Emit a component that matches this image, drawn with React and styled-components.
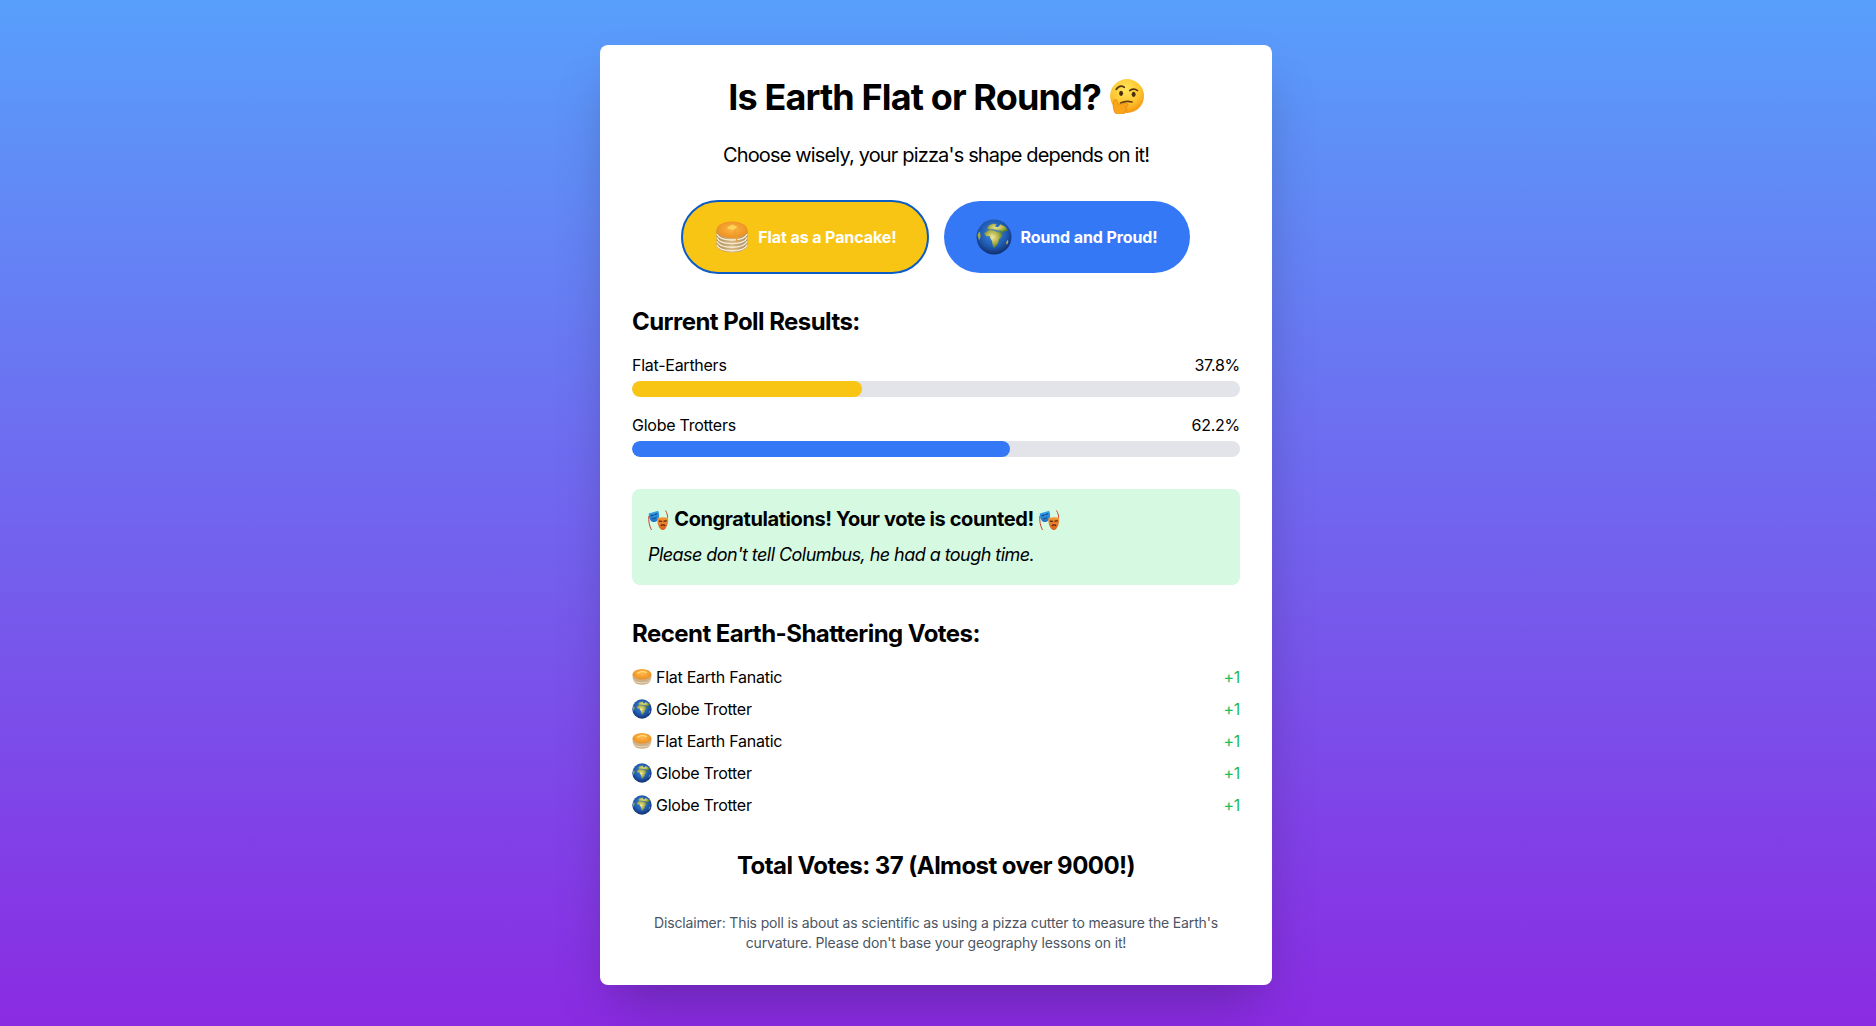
import React from "react";
import styled, { createGlobalStyle } from "styled-components";

const YELLOW = "#f9c514";
const BLUE = "#3578f6";

const results = [
  { label: "Flat-Earthers", value: 37.8, color: YELLOW },
  { label: "Globe Trotters", value: 62.2, color: BLUE },
];

const recent = ["flat", "globe", "flat", "globe", "globe"];

const ThinkingEmoji = () => (
  <EmojiSvg $size={36} viewBox="1.500 0 33 33" aria-label="thinking">
    <defs>
      <radialGradient id="thinkFace" cx="45%" cy="30%" r="72%">
        <stop offset="0" stopColor="#ffe65c" />
        <stop offset="0.6" stopColor="#fec62f" />
        <stop offset="1" stopColor="#f4920f" />
      </radialGradient>
    </defs>
    <circle cx="19" cy="16.500" r="15.500" fill="url(#thinkFace)" />
    <path d="M9 10.500c2-3 5-3.600 7.500-2" fill="none" stroke="#5a3410" strokeWidth="1.500" strokeLinecap="round" />
    <path d="M21.500 11.500c2.200-1.400 5-1.600 7 0" fill="none" stroke="#5a3410" strokeWidth="1.500" strokeLinecap="round" />
    <ellipse cx="13.500" cy="14" rx="1.800" ry="2.400" fill="#4a2c0c" />
    <ellipse cx="25" cy="15" rx="1.800" ry="2.400" fill="#4a2c0c" />
    <path d="M13 23c3-1.600 7-2 10.500-1" fill="none" stroke="#6b3c10" strokeWidth="1.500" strokeLinecap="round" />
    <path
      d="M7 20.500c1.500-1.300 2.800-.6 3.200 1l.8 2.600 7.500-.8c1.800-.1 2 2.300.4 2.700l-2 .6 1.400.8c.8 1.300-.1 2.500-1.300 2.500l.3 1.500c-.2 1.300-1.400 1.800-2.500 1.400-3 1.500-6 .9-7.300-1.600-1.200-2.800-1.600-6-1-8.700z"
      fill="#f9a51c"
      stroke="#e2820f"
      strokeWidth="0.600"
    />
  </EmojiSvg>
);

// stack in the big button
const PancakeEmoji = () => (
  <EmojiSvg $size={36} viewBox="0 0 36 36" aria-label="pancakes">
    <defs>
      <radialGradient id="pancakeTop" cx="50%" cy="45%" r="60%">
        <stop offset="0" stopColor="#fdb440" />
        <stop offset="0.8" stopColor="#ee9426" />
        <stop offset="1" stopColor="#d99a4a" />
      </radialGradient>
      <linearGradient id="pancakeSide" x1="0" x2="1" y1="0" y2="0">
        <stop offset="0" stopColor="#a98a5c" />
        <stop offset="0.5" stopColor="#d8b884" />
        <stop offset="1" stopColor="#a98a5c" />
      </linearGradient>
    </defs>
    <path d="M2.500 11v15c0 4 7 7.500 15.500 7.500s15.500-3.500 15.500-7.500V11z" fill="url(#pancakeSide)" />
    {[0, 1, 2, 3].map((i) => (
      <path
        key={i}
        d={`M2.800 ${15 + i * 3.6}c1.500 3.800 7.500 6 15.200 6s13.700-2.200 15.200-6`}
        fill="none"
        stroke="#f8ecd4"
        strokeWidth="1.400"
      />
    ))}
    <ellipse cx="18" cy="11" rx="15.500" ry="8.500" fill="url(#pancakeTop)" />
    <path d="M13.500 8l5-2.500 5 2.500-4.500 3-5.500-1.200z" fill="#fdd35a" />
    <path d="M20 11l2 4 .8 8" fill="none" stroke="#e8a030" strokeWidth="1.200" />
  </EmojiSvg>
);

// small one in the vote list, reads as one thick cake
const SmallPancake = () => (
  <EmojiSvg $size={20} viewBox="0 0 36 36" aria-label="pancakes">
    <defs>
      <radialGradient id="smallTop" cx="50%" cy="40%" r="60%">
        <stop offset="0" stopColor="#fdb94a" />
        <stop offset="1" stopColor="#ec8f24" />
      </radialGradient>
    </defs>
    <path d="M1 14c0 10 2 18 17 18s17-8 17-18z" fill="#cdb089" />
    <path d="M2 22c3 5 8 6.500 16 6.500S31 27 34 22" fill="none" stroke="#ead9bd" strokeWidth="1.800" />
    <ellipse cx="18" cy="13" rx="17" ry="9.500" fill="url(#smallTop)" />
    <path d="M10 11c4-3 11-3.500 16-1" fill="none" stroke="#fdd675" strokeWidth="2.500" strokeLinecap="round" />
  </EmojiSvg>
);

const GlobeEmoji = ({ size = 36 }) => (
  <EmojiSvg $size={size} viewBox="0 0 36 36" aria-label="globe">
    <defs>
      <radialGradient id="globeSea" cx="48%" cy="40%" r="62%">
        <stop offset="0" stopColor="#3f8fe0" />
        <stop offset="0.65" stopColor="#1e56ad" />
        <stop offset="1" stopColor="#102a66" />
      </radialGradient>
      <radialGradient id="globeLand" cx="45%" cy="40%" r="60%">
        <stop offset="0" stopColor="#efe9a2" />
        <stop offset="0.55" stopColor="#b3b34a" />
        <stop offset="1" stopColor="#48792c" />
      </radialGradient>
    </defs>
    <circle cx="18" cy="18" r="17.500" fill="url(#globeSea)" />
    <path
      d="M9 13.500l4-2.500 5 .5 2.500 1.300 4.500-.3 1.500 3-1 2.800-2.500 2-.6 3.500-2.200 3.400-2.600 2-1-3.500-.6-3.600-1.600-2.500-.7-2.500-3.200.2-2.400-2.500z"
      fill="url(#globeLand)"
    />
    <path
      d="M11 9l2.500-3 4-1.500 3 .8-1.500 2.500 3 .5 2.500-3 5 2.500 2.500 4-3 .5-3 1.500-1.500-2-4-.5-3.500-1-4 .500z"
      fill="url(#globeLand)"
    />
    <path d="M30 24l1.600-3 .8 1.200-1.400 3.600z" fill="#c9b84f" />
    <path d="M1.500 16c.8-2 1.500-3 2.500-3.500l.6 5-1.500 4z" fill="#a6a83f" />
  </EmojiSvg>
);

const MasksEmoji = () => (
  <EmojiSvg $size={21} viewBox="0 0 21 21" aria-label="masks">
    <defs>
      <linearGradient id="maskBlue" x1="0" x2="0" y1="0" y2="1">
        <stop offset="0" stopColor="#38a5ec" />
        <stop offset="1" stopColor="#1c6fc4" />
      </linearGradient>
      <linearGradient id="maskOrange" x1="0" x2="0" y1="0" y2="1">
        <stop offset="0" stopColor="#f09a3a" />
        <stop offset="1" stopColor="#d85f1e" />
      </linearGradient>
    </defs>
    <path d="M.8 6c-.4 5 .5 10 2.700 14" fill="none" stroke="#d0402e" strokeWidth="1" />
    <path d="M17.500 .5c1.800 2.800 2.500 6 1.900 9.500" fill="none" stroke="#c94a30" strokeWidth="1" />
    <path d="M.8 3.500L10.200.7c1.500 3.500 1.300 7.300-1 9.800-1.900 2-5 2.200-6.500.1C1.200 8.500.6 6 .8 3.500z" fill="url(#maskBlue)" />
    <path d="M3.200 5.800l2-.7M7 4.500l1.800-.7" stroke="#0e3f78" strokeWidth="1.100" strokeLinecap="round" />
    <path d="M4.300 8.600c1.500.3 3-.2 3.900-1.300" fill="none" stroke="#0e3f78" strokeWidth="0.900" />
    <path d="M9.300 8.200c3-1.100 7-1.400 10.700-.4.500 3.700-.1 7.500-2.500 10.600-1.500 2-3.500 2.200-5 .7-2.400-2.500-3.500-6.700-3.200-10.900z" fill="url(#maskOrange)" />
    <path d="M11.300 11.200l2.300.1M16 11.200l2.300-.3" stroke="#5c2408" strokeWidth="1.200" strokeLinecap="round" />
    <path d="M12.800 15.800c1.200-1.200 3.300-1.200 4.300.1" fill="none" stroke="#5c2408" strokeWidth="1.100" />
  </EmojiSvg>
);

const App = () => (
  <Page>
    <GlobalStyle />
    <Card>
      <Title>
        Is Earth Flat or Round? <ThinkingEmoji />
      </Title>
      <Subtitle>Choose wisely, your pizza's shape depends on it!</Subtitle>

      <Buttons>
        <VoteButton $bg={YELLOW} $focused>
          <PancakeEmoji />
          Flat as a Pancake!
        </VoteButton>
        <VoteButton $bg={BLUE}>
          <GlobeEmoji />
          Round and Proud!
        </VoteButton>
      </Buttons>

      <Heading>Current Poll Results:</Heading>
      <Results>
        {results.map((r) => (
          <div key={r.label}>
            <ResultLabel>
              <span>{r.label}</span>
              <span>{r.value}%</span>
            </ResultLabel>
            <Track>
              <Fill $color={r.color} style={{ width: `${r.value}%` }} />
            </Track>
          </div>
        ))}
      </Results>

      <Notice>
        <NoticeTitle>
          <MasksEmoji /> Congratulations! Your vote is counted! <MasksEmoji />
        </NoticeTitle>
        <NoticeText>Please don't tell Columbus, he had a tough time.</NoticeText>
      </Notice>

      <Heading>Recent Earth-Shattering Votes:</Heading>
      <VoteList>
        {recent.map((kind, i) => (
          <VoteRow key={i}>
            <VoteName>
              {kind === "flat" ? <SmallPancake /> : <GlobeEmoji size={20} />}
              {kind === "flat" ? "Flat Earth Fanatic" : "Globe Trotter"}
            </VoteName>
            <PlusOne>+1</PlusOne>
          </VoteRow>
        ))}
      </VoteList>

      <Total>Total Votes: 37 (Almost over 9000!)</Total>
      <Disclaimer>
        Disclaimer: This poll is about as scientific as using a pizza cutter to measure the Earth's
        curvature. Please don't base your geography lessons on it!
      </Disclaimer>
    </Card>
  </Page>
);

export default App;

const GlobalStyle = createGlobalStyle`
  * { box-sizing: border-box; }
  body {
    margin: 0;
    font-family: Inter, "Liberation Sans", sans-serif;
    color: #000;
  }
`;

const Page = styled.div`
  min-height: 100vh;
  display: flex;
  justify-content: center;
  align-items: flex-start;
  padding: 45px 4px 0 0;
  background: linear-gradient(to bottom, #589ffb, #8a2be2);
`;

const Card = styled.div`
  width: 672px;
  padding: 32px;
  background: #fff;
  border-radius: 8px;
  box-shadow: 0 25px 50px -12px rgba(0, 0, 0, 0.25);
`;

const EmojiSvg = styled.svg`
  width: ${(p) => p.$size}px;
  height: ${(p) => p.$size}px;
  flex-shrink: 0;
  vertical-align: middle;
`;

const Title = styled.h1`
  margin: 0 0 23px;
  font-size: 36px;
  line-height: 40px;
  font-weight: 700;
  letter-spacing: -0.87px;
  text-align: center;
  svg {
    position: relative;
    top: -4px;
    margin-left: -1px;
  }
`;

const Subtitle = styled.p`
  margin: 0 0 32px;
  font-size: 20px;
  line-height: 28px;
  letter-spacing: -0.84px;
  text-align: center;
`;

const Buttons = styled.div`
  display: flex;
  justify-content: center;
  gap: 16px;
  margin-bottom: 32px;
`;

const VoteButton = styled.button`
  display: flex;
  align-items: center;
  gap: 8px;
  height: 72px;
  padding: 0 32px;
  border: none;
  border-radius: 36px;
  background: ${(p) => p.$bg};
  color: #fff;
  font: 700 16px/24px Inter, "Liberation Sans", sans-serif;
  letter-spacing: -0.1px;
  outline: ${(p) => (p.$focused ? "2px solid #0b5cc4" : "none")};
  outline-offset: -1px;
`;

const Heading = styled.h2`
  margin: 0 0 15px;
  padding-top: 1px;
  font-size: 24px;
  line-height: 32px;
  font-weight: 700;
  letter-spacing: -0.55px;
`;

const Results = styled.div`
  display: flex;
  flex-direction: column;
  gap: 16px;
  margin-bottom: 32px;
`;

const ResultLabel = styled.div`
  display: flex;
  justify-content: space-between;
  margin-bottom: 4px;
  font-size: 16px;
  line-height: 24px;
  letter-spacing: -0.26px;
`;

const Track = styled.div`
  height: 16px;
  border-radius: 8px;
  background: #e2e4e9;
  overflow: hidden;
`;

const Fill = styled.div`
  height: 100%;
  border-radius: 8px;
  background: ${(p) => p.$color};
`;

const Notice = styled.div`
  margin-bottom: 32px;
  padding: 16px;
  border-radius: 8px;
  background: #d6f9e2;
`;

const NoticeTitle = styled.div`
  margin-bottom: 8px;
  font-size: 20px;
  line-height: 28px;
  font-weight: 700;
  letter-spacing: -0.41px;
  svg:first-child {
    margin-right: 1px;
  }
  svg:last-child {
    margin-left: 1px;
  }
`;

const NoticeText = styled.p`
  margin: 0;
  font-size: 18px;
  line-height: 28px;
  font-style: italic;
  letter-spacing: -0.55px;
`;

const VoteList = styled.div`
  display: flex;
  flex-direction: column;
  gap: 8px;
`;

const VoteRow = styled.div`
  display: flex;
  justify-content: space-between;
  font-size: 16px;
  line-height: 24px;
  letter-spacing: -0.26px;
`;

const VoteName = styled.span`
  display: flex;
  align-items: center;
  gap: 4px;
`;

const PlusOne = styled.span`
  color: #1fbb58;
`;

const Total = styled.div`
  margin-top: 32px;
  padding-top: 1px;
  font-size: 24px;
  line-height: 32px;
  font-weight: 700;
  letter-spacing: -0.55px;
  text-align: center;
`;

const Disclaimer = styled.p`
  margin: 31px 0 0;
  font-size: 14px;
  line-height: 20px;
  letter-spacing: -0.15px;
  color: #4b5563;
  text-align: center;
`;
